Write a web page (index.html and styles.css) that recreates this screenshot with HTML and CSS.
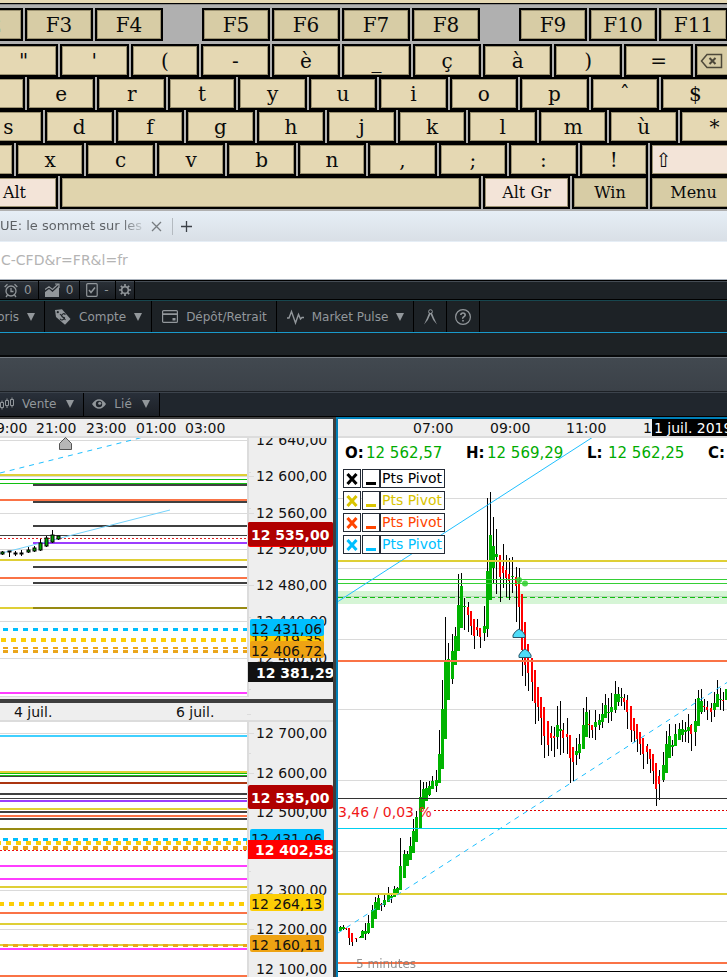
FILE: index.html
```html
<!DOCTYPE html>
<html lang="fr">
<head>
<meta charset="utf-8">
<title>Plateforme de trading</title>
<link rel="stylesheet" href="styles.css">
</head>
<body>
<section class="keyboard" aria-label="Clavier virtuel">
  <div class="keys keys-function">
    <button class="key key-fn key-tail">F2</button><button class="key key-fn">F3</button><button class="key key-fn">F4</button><span></span><button class="key key-fn">F5</button><button class="key key-fn">F6</button><button class="key key-fn">F7</button><button class="key key-fn">F8</button><span></span><button class="key key-fn">F9</button><button class="key key-fn">F10</button><button class="key key-fn key-head">F11</button>
  </div>
  <div class="keys keys-digits">
    <button class="key key-tail">"</button><button class="key">'</button><button class="key">(</button><button class="key">-</button><button class="key">è</button><button class="key">_</button><button class="key">ç</button><button class="key">à</button><button class="key">)</button><button class="key">=</button>
    <button class="key key-fn key-back" aria-label="Retour arrière"><svg width="24" height="16" viewBox="0 0 24 16" fill="none" stroke="#4d483a" stroke-width="1.5"><path d="M7 1.5H21.500V14.500H7L1.500 8Z"/><path d="M9.500 5l6 6M15.500 5l-6 6" stroke-width="2"/></svg></button>
  </div>
  <div class="keys keys-top">
    <button class="key key-tail">z</button><button class="key">e</button><button class="key">r</button><button class="key">t</button><button class="key">y</button><button class="key">u</button><button class="key">i</button><button class="key">o</button><button class="key">p</button><button class="key">ˆ</button><button class="key key-head">$</button>
  </div>
  <div class="keys keys-home">
    <button class="key key-tail">s</button><button class="key">d</button><button class="key">f</button><button class="key">g</button><button class="key">h</button><button class="key">j</button><button class="key">k</button><button class="key">l</button><button class="key">m</button><button class="key">ù</button><button class="key key-head">*</button>
  </div>
  <div class="keys keys-low">
    <button class="key key-tail">w</button><button class="key">x</button><button class="key">c</button><button class="key">v</button><button class="key">b</button><button class="key">n</button><button class="key">,</button><button class="key">;</button><button class="key">:</button><button class="key">!</button><button class="key key-mod key-shift">⇧</button>
  </div>
  <div class="keys keys-space">
    <button class="key key-mod key-word key-tail">Alt</button><button class="key key-bar" aria-label="Espace"></button><button class="key key-mod key-word">Alt Gr</button><button class="key key-fn key-word">Win</button><button class="key key-fn key-word key-head">Menu</button>
  </div>
</section>

<nav class="tabs">
  <a class="tab" href="#">UE: le sommet sur les</a>
  <button class="tab-btn" aria-label="Fermer l'onglet"><svg width="11" height="11" viewBox="0 0 11 11" stroke="#777c80" stroke-width="1.3"><path d="M1 1l9 9M10 1l-9 9"/></svg></button>
  <button class="tab-btn tab-new" aria-label="Nouvel onglet"><svg width="11" height="11" viewBox="0 0 11 11" stroke="#3c4147" stroke-width="1.3"><path d="M5.500 0v11M0 5.500h11"/></svg></button>
</nav>
<input class="address" type="text" aria-label="Adresse" value="C-CFD&amp;r=FR&amp;l=fr">

<div class="status">
  <button class="stat"><svg width="14" height="15" viewBox="0 0 14 15" fill="none" stroke="currentColor" stroke-width="1.3"><circle cx="7" cy="8" r="5"/><path d="M7 5v3.500h2.500M.7 4L3.500 1.200M13.300 4L10.500 1.200M3.500 12L2 14M10.500 12l1.500 2"/></svg>0</button>
  <button class="stat"><svg width="15" height="14" viewBox="0 0 15 14"><path d="M0 14V9l4-3 3.500 3L14 3v11z" fill="currentColor"/><path d="M0 6.500l4-2.700 3.500 2.600L13 1.300M10 1h4v4" fill="none" stroke="currentColor" stroke-width="1.2"/></svg>0</button>
  <button class="stat"><svg width="12" height="14" viewBox="0 0 12 14" fill="none" stroke="currentColor" stroke-width="1.2"><rect x=".7" y=".7" width="10.500" height="12.600" rx="1"/><path d="M3 7l2 2.500L9 4.500" stroke-width="1.500"/></svg>-</button>
  <button class="stat stat-gear" aria-label="Réglages"><svg width="12" height="12" viewBox="0 0 12 12" fill="none" stroke="currentColor"><circle cx="6" cy="6" r="3.300" stroke-width="1.500"/><path d="M6 0v2.500M6 9.500V12M0 6h2.500M9.500 6H12M1.800 1.800l1.700 1.700M8.500 8.500l1.700 1.700M10.200 1.800L8.500 3.500M3.500 8.500l-1.700 1.700" stroke-width="1.700"/></svg></button>
</div>

<nav class="toolbar">
  <button class="tool tool-cut"><span>Favoris</span><i class="caret"></i></button>
  <button class="tool"><svg width="16" height="16" viewBox="0 0 16 16"><path d="M0 1l7-.8L15.500 10 10 15.800 1 8z" fill="currentColor"/><circle cx="2.800" cy="3.200" r="1.100" fill="#1d2226"/><path d="M10.500 5.500Q8 3.700 7 5.800t1.500 2.600-.8 2.300Q6.300 11.600 5 9.700M5 5l5.500 6" fill="none" stroke="#1d2226" stroke-width="1.100"/></svg>Compte<i class="caret"></i></button>
  <button class="tool"><svg width="16" height="13" viewBox="0 0 16 13"><rect x=".6" y=".6" width="14.800" height="11.800" rx="1" fill="none" stroke="currentColor" stroke-width="1.200"/><path d="M0 3.200h16v1.800H0zM10.500 8h3v2.500h-3z" fill="currentColor"/></svg>Dépôt/Retrait</button>
  <button class="tool"><svg width="17" height="16" viewBox="0 0 17 16" fill="none" stroke="currentColor" stroke-width="1.400"><path d="M0 9h2L4.500 2.500 8.500 14l3-8.500 2 4.500L15 8.500h2"/></svg>Market Pulse<i class="caret"></i></button>
  <button class="tool" aria-label="Outils de dessin"><svg width="13" height="16" viewBox="0 0 13 16"><circle cx="6.500" cy="2.600" r="1.900" fill="none" stroke="currentColor"/><path d="M5 4l-2 5-3 6.500 3.800-4.500L6.500 5l2.700 6L13 15.500 10 9 8 4z" fill="currentColor"/></svg></button>
  <button class="tool tool-help" aria-label="Aide"><svg width="16" height="16" viewBox="0 0 16 16" fill="none" stroke="currentColor"><circle cx="8" cy="8" r="7.400" stroke-width="1.200"/><path d="M5.800 6Q6 4 8 4t2.200 2Q10.200 7 8.800 7.900T8 9.700M8 11v1.500" stroke-width="1.600"/></svg></button>
</nav>
<div class="band-dark"></div>
<div class="band-title"></div>
<nav class="chartbar">
  <button class="tool tool-flush"><svg width="14" height="13" viewBox="0 0 14 13" fill="none" stroke="currentColor"><path d="M.5 5.500h3v5h-3zM5.500 3.500h3v5h-3zM10.500 2.500h3v6h-3zM2 3.500v2M2 10.500v2M7 1.500v2M7 8.500v2.500M12 .5v2M12 8.500v2"/></svg>Vente<i class="caret"></i></button>
  <button class="tool tool-link"><svg width="14" height="10" viewBox="0 0 14 10"><path d="M0 5Q3 .3 7 .3T14 5Q11 9.700 7 9.700T0 5z" fill="currentColor"/><circle cx="7" cy="5" r="3.200" fill="#20252c"/><circle cx="7.700" cy="4.200" r="1.500" fill="currentColor"/></svg>Lié<i class="caret"></i></button>
</nav>

<main class="charts">
  <section class="pane pane-intraday">
    <svg class="plot" width="333" height="280" role="img" aria-label="Graphique intraday">
      <g transform="translate(0,-419)">
        <rect x="249" y="436" width="84" height="263" class="axis-bg"/>
        <rect x="0" y="696" width="333" height="3" class="axis-bg"/>
        <g id="levels-a"></g>
        <path d="M0 473L144 437" class="trend dash"/>
        <path d="M0 553.500L170 510" class="trend pale"/>
        <g id="candles-a"></g>
        <path d="M248 437v260" class="axis-line"/>
        <path d="M249 476.500h5M249 513.500h5M249 585.500h5M249 472.500h2M249 508.500h2M249 617.500h2M249 689.500h2" class="axis-tick"/>
        <g class="label">
          <text x="256" y="445">12 640,00</text><text x="256" y="481">12 600,00</text><text x="256" y="518">12 560,00</text><text x="256" y="554">12 520,00</text><text x="256" y="590">12 480,00</text><text x="256" y="626">12 440,00</text><text x="256" y="663">12 400,00</text>
        </g>
        <rect x="0" y="419" width="333" height="18" class="axis-bg"/>
        <rect x="0" y="436" width="333" height="2" fill="#dcdcdc"/>
        <g class="label">
          <text x="-13" y="433">19:00</text><text x="36" y="433">21:00</text><text x="86" y="433">23:00</text><text x="136" y="433">01:00</text><text x="185" y="433">03:00</text>
        </g>
        <path d="M59.500 449.500v-6l6-6 6 6v6z" fill="#b7b7b7" stroke="#555"/>
        <rect x="248" y="522" width="85" height="25" rx="2" fill="#f00"/><rect x="248" y="522" width="85" height="24" rx="2" fill="#b00000"/>
        <text x="251" y="540" class="tag">12 535,00</text>
        <rect x="250" y="630" width="74" height="17" rx="2" fill="#fcce06"/><text x="251" y="645" class="label">12 419,35</text>
        <rect x="250" y="619" width="74" height="17" rx="2" fill="#00bfff"/><text x="251" y="634" class="label">12 431,06</text>
        <rect x="250" y="641" width="74" height="17" rx="2" fill="#eea313"/><text x="251" y="656" class="label">12 406,72</text>
        <rect x="248" y="662" width="85" height="20" fill="#111"/><text x="256" y="678" class="tag">12 381,29</text>
      </g>
    </svg>
  </section>
  <section class="pane pane-daily">
    <svg class="plot" width="333" height="274" role="img" aria-label="Graphique journalier">
      <g transform="translate(0,-703)">
        <rect x="249" y="703" width="84" height="274" class="axis-bg"/>
        <g id="levels-b"></g>
        <rect x="0" y="703" width="333" height="17" class="axis-bg"/>
        <rect x="0" y="720" width="333" height="2" fill="#dcdcdc"/>
        <path d="M248 721v256" class="axis-line"/>
        <path d="M247 714.500h4M249 733.500h5M249 773.500h5M249 929.500h5M249 753.500h2M249 871.500h2" class="axis-tick"/>
        <g class="label">
          <text x="14" y="717">4 juil.</text><text x="176" y="717">6 juil.</text>
          <text x="256" y="738">12 700,00</text><text x="256" y="778">12 600,00</text><text x="256" y="817">12 500,00</text><text x="256" y="895">12 300,00</text><text x="256" y="934">12 200,00</text><text x="256" y="974">12 100,00</text>
        </g>
        <rect x="248" y="785" width="85" height="24" rx="2" fill="#b00000"/><text x="251" y="803" class="tag">12 535,00</text>
        <rect x="250" y="829" width="74" height="17" rx="2" fill="#00bfff"/><text x="251" y="844" class="label">12 431,06</text>
        <rect x="248" y="840" width="85" height="19" fill="#f00"/><text x="255" y="855" class="tag">12 402,58</text>
        <rect x="250" y="894" width="74" height="17" rx="2" fill="#fcce06"/><text x="251" y="909" class="label">12 264,13</text>
        <rect x="250" y="935" width="74" height="17" rx="2" fill="#eea313"/><text x="251" y="950" class="label">12 160,11</text>
      </g>
    </svg>
  </section>
  <section class="pane pane-main">
    <header class="quote">
      <b>O:</b><span>12 562,57</span><b>H:</b><span>12 569,29</span><b>L:</b><span>12 562,25</span><b>C:</b>
    </header>
    <ul class="pivots">
      <li class="pivot p-black"><button aria-label="Supprimer"><svg width="12" height="12" viewBox="0 0 12 12"><path d="M1.500 1l9 10M10.500 1l-9 10"/></svg></button><button class="min" aria-label="Réduire"></button><span>Pts Pivot</span></li>
      <li class="pivot p-yellow"><button aria-label="Supprimer"><svg width="12" height="12" viewBox="0 0 12 12"><path d="M1.500 1l9 10M10.500 1l-9 10"/></svg></button><button class="min" aria-label="Réduire"></button><span>Pts Pivot</span></li>
      <li class="pivot p-orange"><button aria-label="Supprimer"><svg width="12" height="12" viewBox="0 0 12 12"><path d="M1.500 1l9 10M10.500 1l-9 10"/></svg></button><button class="min" aria-label="Réduire"></button><span>Pts Pivot</span></li>
      <li class="pivot p-blue"><button aria-label="Supprimer"><svg width="12" height="12" viewBox="0 0 12 12"><path d="M1.500 1l9 10M10.500 1l-9 10"/></svg></button><button class="min" aria-label="Réduire"></button><span>Pts Pivot</span></li>
    </ul>
    <svg class="plot plot-main" height="558" role="img" aria-label="Graphique 5 minutes">
      <g transform="translate(-338,-419)">
        <rect x="338" y="591" width="4000" height="13" fill="#d6f5d6"/>
        <g id="levels-c"></g>
        <g id="candles-c"></g>
        <g id="overlays-c"></g>
        <path d="M338 601.500L593 437" class="trend"/>
        <path d="M338 933L727 682.500" class="trend dash"/>
        <g fill="#2fcf2f" opacity=".85"><circle cx="519" cy="580" r="3"/><circle cx="525" cy="583.500" r="3"/></g>
        <g fill="#4fdcf8" stroke="#29566b"><path d="M513 637.500v-2.500q2-4 6-6 4 2 6 6v2.500z"/><path d="M519 657.500v-2.500q2-4 6-6 4 2 6 6v2.500z"/></g>
        <rect x="338" y="419" width="4000" height="17" class="axis-bg"/>
        <rect x="338" y="436" width="4000" height="2" fill="#dcdcdc"/>
        <g class="label"><text x="413" y="433">07:00</text><text x="490" y="433">09:00</text><text x="566" y="433">11:00</text><text x="643" y="433">13:00</text></g>
        <rect x="652" y="418" width="105" height="18" fill="#000"/><text x="654" y="433" class="label date">1 juil. 2019 12:50</text>
        <text x="338" y="817" class="label loss">3,46 / 0,03 %</text>
        <text x="356" y="968" class="label frame">5 minutes</text>
      </g>
    </svg>
  </section>
</main>
<script src="chart.js"></script>
</body>
</html>
```
FILE: styles.css
```css
* { box-sizing: border-box; }
body { margin: 0; overflow-x: hidden; background: #fff; font-family: "DejaVu Sans", sans-serif; font-size: 12px; }
button { margin: 0; padding: 0; border: 0; background: none; font: inherit; color: inherit; }

/* keyboard */
.keyboard { overflow: hidden; border-top: 3px solid #e6d9b4; background: #b0b0b0; box-shadow: inset 0 1px 0 #000, inset 0 2px 0 #8a8a8a; padding: 5px 0 2px; }
.keys { display: grid; column-gap: 2px; height: 33px; }
.keys-function { grid-template-columns: 23px 1fr 1fr 35px repeat(4, 1fr) 35px 1fr 1fr 68px; margin-bottom: 3px; }
.keys-digits { grid-template-columns: 58px repeat(9, 1fr) 32px; }
.keys-top { grid-template-columns: 25px repeat(9, 1fr) 66px; }
.keys-home { grid-template-columns: 43px repeat(9, 1fr) 47px; }
.keys-low { grid-template-columns: 14px repeat(9, 1fr) 77px; }
.keys-space { grid-template-columns: 58px 1fr 87px 76px 77px; }
.key { display: flex; align-items: center; justify-content: center; min-width: 0; border: 2px solid #000; background: #e5d8b3; box-shadow: inset 0 0 0 1px #9c9272; color: #0a0a0a; font-family: "DejaVu Serif", serif; font-size: 20px; line-height: 24px; }
.key-fn { background: #d7cca5; }
.key-mod { background: #f3e4d8; }
.key-bar { background: #e0d4ad; }
.key-tail { width: 69px; justify-self: end; }
.key-head { width: 69px; }
.key-word { font-size: 16px; }
.key-word.key-tail, .key-word.key-head { width: 87px; }
.key-shift { justify-content: flex-start; width: 140px; padding-left: 3px; }
.key-back { justify-content: flex-start; width: 69px; padding-left: 3px; }

/* browser chrome */
.tabs { display: flex; align-items: center; height: 31px; background: linear-gradient(#e6eef6, #d9dfe6); border-bottom: 1px solid #e6eef6; }
.tab { color: #5c6064; font-size: 13px; line-height: 16px; text-decoration: none; white-space: nowrap; background: linear-gradient(90deg, #5c6064 85%, #c3cad0); background-clip: text; -webkit-text-fill-color: transparent; }
.tab-btn { display: flex; margin-left: 9px; }
.tab-new { margin-left: 10px; padding: 3px 8px; border-left: 1px solid #b4bac0; }
.address { display: block; width: 100%; height: 38px; border: 0; border-bottom: 1px solid #aab2bc; padding: 0 1px 1px; background: #fff; color: #b4b4b4; font-family: "DejaVu Sans", sans-serif; font-size: 14px; }

/* application bars */
.status, .toolbar, .chartbar { display: flex; align-items: stretch; color: #92979b; }
.status { height: 20px; border-top: 1px solid #000; border-bottom: 1px solid #000; background: #1d2226; box-shadow: inset 0 1px 0 #454c54; }
.stat { display: flex; align-items: center; gap: 6px; padding: 0 6px; border-right: 1px solid #000; background: linear-gradient(#2b3138, #1a1e23); box-shadow: inset 0 1px 0 #454c54; }
.stat:first-child { padding-left: 4px; }
.stat-gear { padding: 0 3px; margin-right: 1px; }
.toolbar { height: 32px; background: #1d2226; border-top: 1px solid #17474f; }
.tool { display: flex; align-items: center; gap: 8px; padding: 0 9px 0 10px; border-right: 1px solid #000; white-space: nowrap; }
.tool-cut { justify-content: flex-end; width: 45px; }
.tool-help { padding: 0 8px; }
.caret { width: 0; height: 0; border: 4px solid transparent; border-top: 8px solid #92979b; border-bottom: 0; }
.band-dark { height: 25px; border-top: 1px solid #199acb; border-bottom: 2px solid #060809; background: #1d2225; }
.band-title { height: 35px; border-top: 1px solid #747b82; border-bottom: 1px solid #1c2025; background: linear-gradient(#424950, #3b4148); }
.chartbar { height: 25px; border-top: 1px solid #3c434c; border-bottom: 1px solid #000; background: #20262d; }
.chartbar .tool { background: linear-gradient(#29303a, #1c2026); padding-bottom: 2px; }
.chartbar .caret { margin-left: 2px; }
.chartbar .tool-flush { padding-left: 0; }
.chartbar .tool-link { padding-left: 8px; }

/* charts */
.charts { display: grid; grid-template-columns: 336px 1fr; grid-template-rows: 284px auto; }
.pane { position: relative; overflow: hidden; background: #fff; }
.pane-intraday { border: solid #3e3e3e; border-width: 2px 3px 4px 0; margin-bottom: -2px; }
.pane-daily { grid-row: 2; border-right: 3px solid #3e3e3e; margin-top: 2px; }
.pane-main { grid-column: 2; grid-row: 1 / 3; border: solid #0080b8; border-width: 2px 0 0 2px; }
.plot { display: block; }
.plot-main { width: 100%; }
.axis-bg { fill: #eee; }
.axis-line { fill: none; stroke: #dcdcdc; stroke-width: 2px; shape-rendering: crispEdges; }
.axis-tick { fill: none; stroke: #dcdcdc; stroke-width: 1px; shape-rendering: crispEdges; }
.trend { fill: none; stroke: #1fbfff; stroke-width: 1px; }
.pale { stroke: #74d2fb; }
.dash { stroke-dasharray: 5 5; }
.label { fill: #111; font-size: 14px; }
.tag { fill: #fff; font-size: 14px; font-weight: bold; }
.date { fill: #fff; }
.loss { fill: #f01818; }
.frame { fill: #777; opacity: .8; font-size: 12px; }
.quote { position: absolute; top: 25px; left: 7px; display: grid; grid-template-columns: 21px 100px 21px 100px 21px 100px 21px; font-size: 15px; line-height: 18px; white-space: nowrap; }
.quote span { color: #00ab00; }
.pivots { position: absolute; top: 50px; left: 5px; display: grid; gap: 3px; margin: 0; padding: 0; list-style: none; font-size: 14px; line-height: 17px; }
.pivot { display: flex; }
.pivot button { display: flex; align-items: center; justify-content: center; width: 18px; height: 19px; margin-right: 1px; border: 1px solid #232a35; background: #fff; }
.pivot path { stroke: currentColor; stroke-width: 3px; }
.pivot .min { margin-right: -1px; }
.min::before { content: ""; width: 10px; height: 3px; margin-top: 10px; background: currentColor; }
.pivot span { width: 66px; padding-left: 1px; border: 1px solid #232a35; border-left-width: 2px; background: #fff; white-space: nowrap; }
.p-black { color: #000; }
.p-yellow { color: #d9c400; }
.p-orange { color: #ff4500; }
.p-blue { color: #00bfff; }
```
FILE: chart.js
```js
const NS = "http://www.w3.org/2000/svg";
const YELLOW = "#dfcf36", DARK = "#404040", ORANGE = "#fa7346", GRID = "#dadada",
  GREEN = "#10c010", PURPLE = "#9b3dff", OLIVE = "#978a12", BLUE = "#00bfff",
  GOLD = "#fcce06", AMBER = "#eba51b", MAGENTA = "#ff3dff";

function add(parent, name, attrs) {
  const el = document.createElementNS(NS, name);
  for (const key in attrs) el.setAttribute(key, attrs[key]);
  parent.appendChild(el);
}

// level: [y, thickness, colour, start x, dash, dash offset]
function drawLevels(id, from, to, levels) {
  const group = document.getElementById(id);
  for (const [y, size, colour, start = from, dash = "none", offset = 0] of levels) {
    const mid = size % 2 ? y + 0.5 : y;
    add(group, "line", {
      x1: start, x2: to, y1: mid, y2: mid, stroke: colour, "stroke-width": size,
      "stroke-dasharray": dash, "stroke-dashoffset": offset, "shape-rendering": "crispEdges"
    });
  }
}

drawLevels("levels-a", 0, 248, [
  [440, 1, GRID], [476, 1, GRID], [513, 1, GRID], [549, 1, GRID], [585, 1, GRID], [621, 1, GRID], [658, 1, GRID],
  [475, 2, YELLOW], [479, 1, GREEN], [483, 1, GREEN], [485, 2, DARK, 33], [500, 2, ORANGE], [502, 2, DARK, 33],
  [526, 2, DARK, 33], [535, 1, DARK], [538, 1, "#e02020", 0, "2 2"], [543, 2, PURPLE, 33], [560, 2, YELLOW],
  [567, 2, DARK, 33], [578, 2, ORANGE], [583, 2, DARK, 33], [608, 2, YELLOW], [608, 2, OLIVE, 33],
  [629, 3, BLUE, 3, "5 5"], [640, 4, GOLD, 1, "5 5"], [648, 2, AMBER, 3, "5 5"], [651, 3, AMBER, 3, "5 5"],
  [693, 2, MAGENTA], [696, 1, GRID]
]);

drawLevels("levels-b", 0, 248, [
  [733, 1, GRID], [890, 1, GRID], [929, 1, GRID],
  [736, 2, "#3fd0ff"], [772, 2, YELLOW], [773, 1, GREEN], [775, 1, GREEN], [776, 1, DARK], [783, 2, "#ab3510"],
  [794, 2, DARK], [798, 1, DARK], [801, 2, PURPLE], [809, 2, YELLOW], [812, 2, DARK], [816, 2, ORANGE],
  [819, 2, DARK], [829, 2, OLIVE], [839, 3, BLUE, 3, "5 5"], [843, 4, GOLD, -4, "5 5"], [848, 4, AMBER, 3, "5 5"],
  [850, 1, "#f01010", 0, "2 2"], [866, 2, MAGENTA], [879, 2, MAGENTA], [887, 2, YELLOW], [904, 4, GOLD, -1, "5 5"],
  [913, 2, ORANGE], [924, 2, YELLOW], [945, 2, YELLOW], [945, 3, AMBER, 3, "5 5"], [949, 2, MAGENTA], [976, 2, ORANGE]
]);

drawLevels("levels-c", 338, 4000, [
  [498, 1, GRID], [568, 1, GRID], [639, 1, GRID], [709, 1, GRID], [780, 1, GRID], [851, 1, GRID], [921, 1, GRID],
  [596, 1, "#b6d6b6"], [597, 1, GREEN, 338, "5 3"]
]);

drawLevels("overlays-c", 338, 4000, [
  [561, 2, YELLOW], [579, 1, "#35cf35"], [583, 1, "#35cf35"], [661, 2, ORANGE], [798, 1, "#333"],
  [810, 1, "#e00000", 434, "2 2"], [828, 1, "#00d0f0"], [894, 2, YELLOW], [963, 2, ORANGE], [971, 1, "#000"]
]);

// candle: x, high, body top, body bottom, low, u(p) or d(own)
const main = `340 926 927 931 931 u;343 925 927 929 930 u;346 928 928 929 930 d;349 928 928 938 945 d;352 933 933 942 946 d;
356 938 938 939 942 d;360 936 937 938 938 u;362 930 931 938 938 u;365 923 931 934 940 u;368 915 923 933 934 u;
372 905 910 928 928 u;375 897 902 919 919 u;378 895 898 910 910 u;381 903 904 905 911 d;384 894 900 905 907 u;
388 887 893 902 902 u;391 893 896 898 903 u;394 886 889 897 897 u;397 887 888 894 894 u;400 838 866 890 890 u;
404 850 854 878 878 u;407 851 854 866 866 u;410 837 846 860 860 u;413 819 831 853 853 u;416 811 817 842 842 u;
420 780 797 828 828 u;423 782 789 809 809 u;426 782 788 801 801 u;429 781 786 795 796 u;432 776 781 789 789 u;
436 770 780 786 792 u;439 730 754 783 783 u;442 680 709 769 769 u;445 617 661 739 739 u;448 643 659 700 700 u;
452 634 651 679 684 u;455 627 636 665 665 u;458 574 605 651 651 u;461 573 586 628 628 u;464 598 606 607 630 u;
468 602 607 615 632 d;471 611 611 626 635 d;474 619 619 636 649 d;477 619 627 630 636 d;480 628 628 637 648 d;
484 606 626 633 641 u;487 498 571 629 637 u;490 492 535 600 600 u;493 517 546 568 583 u;496 529 554 557 594 u;
500 555 555 577 602 d;503 544 566 573 588 d;506 555 570 578 597 d;509 558 574 581 600 d;512 557 576 577 593 u;
516 567 577 586 622 d;519 568 581 607 630 d;522 594 594 650 676 d;525 622 622 665 686 d;528 644 644 673 691 d;
532 658 658 682 701 d;535 670 670 703 724 d;538 687 687 707 721 d;541 697 697 718 745 d;544 707 707 736 758 d;
548 721 721 745 756 d;551 726 733 738 751 d;554 727 736 738 757 d;557 706 725 737 749 u;560 701 729 731 755 u;
563 723 730 738 753 d;567 718 734 737 754 d;570 735 735 758 783 d;573 747 747 762 781 d;576 738 751 755 765 u;
579 734 744 753 759 u;583 708 725 749 749 u;586 697 712 737 737 u;589 710 724 725 738 d;592 725 725 730 738 d;
595 710 722 727 740 u;599 714 720 725 730 u;602 703 714 722 728 u;605 694 705 718 718 u;608 698 712 713 723 u;
611 693 707 712 721 u;615 681 694 710 713 u;618 687 694 702 706 u;621 688 697 698 706 u;624 694 698 702 710 d;
627 695 700 712 729 d;631 706 706 730 742 d;634 718 718 731 742 d;637 724 724 739 752 d;640 732 732 744 755 d;
643 738 738 754 769 d;647 744 746 752 764 d;650 749 749 759 773 d;653 754 754 771 784 d;656 763 763 789 806 d;
659 770 776 784 800 d;663 752 765 780 782 u;666 731 744 773 773 u;669 724 736 758 758 u;672 740 745 747 756 u;
675 724 734 746 746 u;679 723 729 740 740 u;682 720 729 735 742 u;685 722 730 732 742 u;688 714 727 731 743 u;
691 724 725 734 751 d;695 699 721 732 746 u;698 690 698 726 726 u;701 689 701 712 714 u;704 699 706 707 712 d;
707 701 707 710 720 d;711 703 708 712 722 d;714 692 703 710 717 u;717 680 694 707 707 u;720 688 699 700 710 u;
723 692 700 701 711 d;726 689 689 700 700 u`;

const mainGroup = document.getElementById("candles-c");
for (const row of main.split(";")) {
  const [x, high, top, bottom, low, dir] = row.trim().split(" ").map(v => isNaN(v) ? v : +v);
  const up = dir === "u";
  add(mainGroup, "rect", { x, y: high, width: 1, height: low - high, fill: "#000" });
  add(mainGroup, "rect", { x: x - 1, y: top, width: up ? 3 : 2, height: bottom - top, fill: up ? "#00b400" : "#f00" });
  if (!up) add(mainGroup, "rect", { x, y: top, width: 1, height: bottom - top, fill: "#f00" });
}

const intraday = [
  [2, 551, 552, 554, 555], [9, 551, 551, 552, 557], [15, 551, 553, 554, 556], [21, 550, 553, 554, 556],
  [28, 547, 550, 552, 553], [34, 546, 548, 551, 552], [40, 539, 543, 550, 551], [46, 536, 538, 546, 547],
  [52, 530, 535, 542, 543], [58, 536, 536, 539, 540]
];
const smallGroup = document.getElementById("candles-a");
for (const [x, high, top, bottom, low] of intraday) {
  add(smallGroup, "rect", { x, y: high, width: 1, height: low - high, fill: "#000" });
  add(smallGroup, "rect", { x: x - 1, y: top, width: 3, height: bottom - top, fill: "#0a0", stroke: "#000" });
}
```
